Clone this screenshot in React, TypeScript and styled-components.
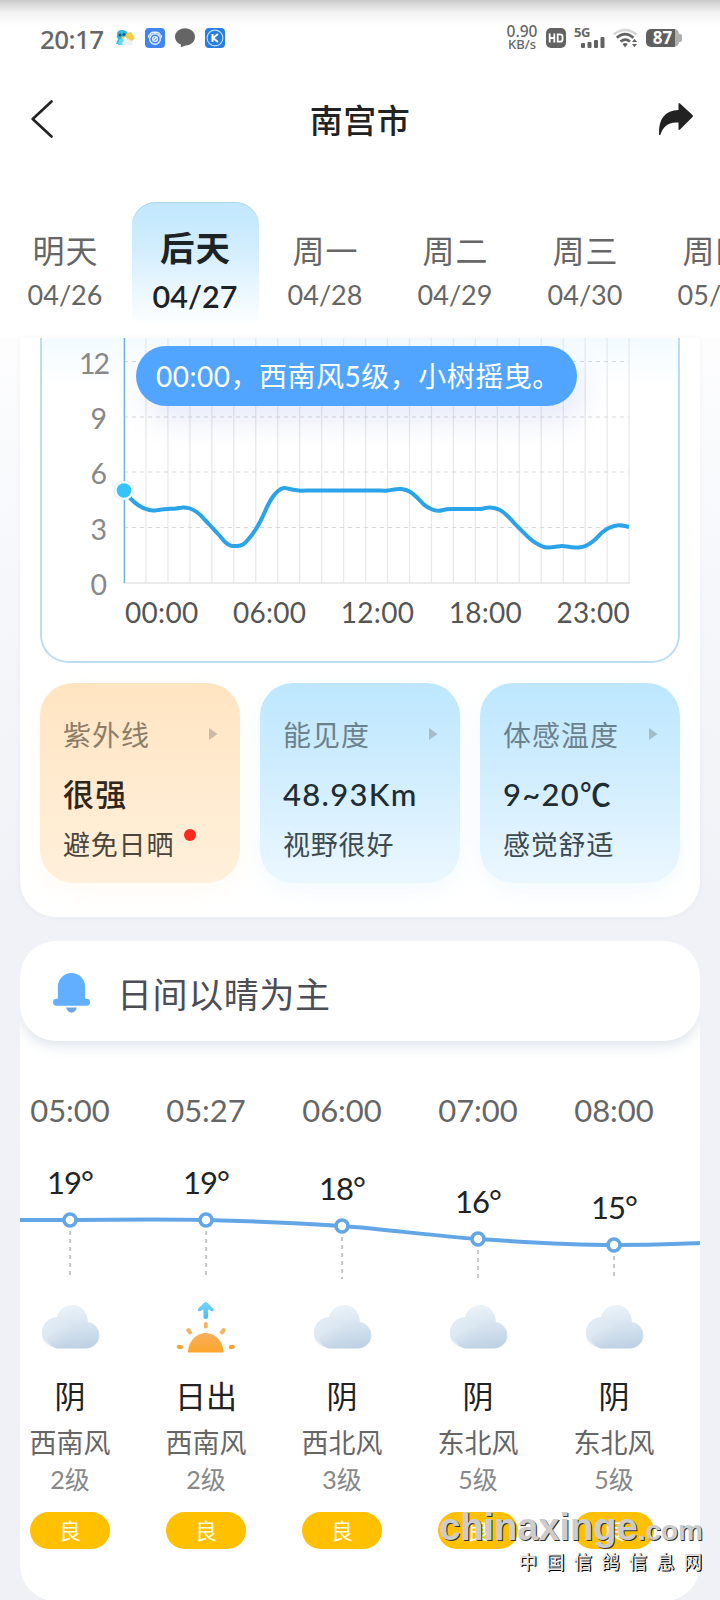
import React from 'react';
import styled, { createGlobalStyle } from 'styled-components';

const Global = createGlobalStyle`
  * { box-sizing: border-box; }
  body { margin: 0; background: #f1f2f7; }
`;

const Screen = styled.main`
  position: relative;
  width: 720px;
  height: 1600px;
  overflow: hidden;
  font-family: Lato, 'Noto Sans CJK SC', sans-serif;
  color: #222;
  background: linear-gradient(#fdfdfe 338px, #f4f6fa 640px, #f1f2f7 900px, #f0f1f6);
`;

const TopArea = styled.header`
  height: 338px;
  background: linear-gradient(#cacaca 0, #dcdcdc 5px, #f3f3f3 13px, #fff 26px);
`;

const StatusBar = styled.div`
  display: flex;
  align-items: center;
  height: 76px;
  padding: 0 38px 0 40px;
  color: #666;
`;

const Clock = styled.span`
  width: 75px;
  padding-top: 2px;
  font: 500 26px/36px 'Noto Sans', sans-serif;
  letter-spacing: -0.6px;
  white-space: nowrap;
`;

const StatusIcons = styled.div<{ $gap: number }>`
  display: flex;
  align-items: center;
  gap: ${(p) => p.$gap}px;
`;

const Spacer = styled.div`
  flex: 1;
`;

const NetSpeed = styled.div`
  width: 32px;
  margin-right: 8px;
  font: 500 13px/13px 'Noto Sans', sans-serif;
  text-align: center;
  white-space: nowrap;
  span { display: block; }
  span:first-child { font-size: 15.5px; }
`;

const TitleBar = styled.div`
  display: flex;
  align-items: center;
  justify-content: space-between;
  height: 86px;
  padding: 0 26px 0 30px;
`;

const Title = styled.h1`
  margin: 2px 0 0 8px;
  font-size: 33px;
  font-weight: 500;
  line-height: 48px;
  letter-spacing: 0.5px;
`;

const Tabs = styled.nav`
  display: flex;
  width: 780px;
  padding-top: 40px;
`;

const Tab = styled.div<{ $active?: boolean }>`
  flex: none;
  display: flex;
  flex-direction: column;
  align-items: center;
  width: 127px;
  height: 124px;
  margin: 0 1.5px;
  border-radius: 24px 24px 12px 12px;
  color: ${(p) => (p.$active ? '#1d2226' : '#666')};
  background: ${(p) => (p.$active ? 'linear-gradient(#c2e7fd, #d0edfe 35%, #fff)' : 'none')};
  box-shadow: ${(p) => (p.$active ? 'inset 0 1px 0 #acd6ee' : 'none')};
`;

const TabDay = styled.span<{ $active?: boolean }>`
  padding-top: ${(p) => (p.$active ? 21 : 25)}px;
  font-size: ${(p) => (p.$active ? 34.5 : 32)}px;
  font-weight: ${(p) => (p.$active ? 600 : 400)};
  line-height: ${(p) => (p.$active ? 50 : 48)}px;
  letter-spacing: 1px;
  text-indent: 1px;
`;

const TabDate = styled.span<{ $active?: boolean }>`
  padding-top: ${(p) => (p.$active ? 3 : 0)}px;
  font-size: ${(p) => (p.$active ? 30.5 : 27)}px;
  font-weight: ${(p) => (p.$active ? 600 : 400)};
  line-height: 40px;
`;

const WindCard = styled.section`
  height: 579px;
  margin: 0 20px;
  padding: 0 20px;
  border-radius: 0 0 36px 36px;
  background: #fff;
  box-shadow: 0 0 6px rgba(40, 60, 100, 0.05);
`;

const ChartBox = styled.div`
  position: relative;
  height: 325px;
  border: 2px solid #bddcf2;
  border-top: 0;
  border-radius: 0 0 28px 28px;
  background: linear-gradient(#f3fbff, #fff 50px);
`;

const ChartRow = styled.div`
  display: flex;
  height: 245px;
`;

const YAxis = styled.div`
  display: flex;
  flex-direction: column;
  gap: 5.2px;
  width: 65px;
  margin-right: 17px;
  font-size: 28.5px;
  line-height: 50px;
  text-align: right;
  color: #888;
  span:first-child { letter-spacing: -2px; margin-right: -1px; }
`;

const Plot = styled.svg`
  display: block;
  overflow: visible;
`;

const XAxis = styled.div`
  display: flex;
  justify-content: space-between;
  width: 505px;
  margin-left: 83px;
  padding-top: 9px;
  font-size: 28px;
  line-height: 40px;
  letter-spacing: 0.3px;
  color: #555;
`;

const Tooltip = styled.div`
  position: absolute;
  left: 94px;
  top: 7.5px;
  width: 441px;
  height: 60px;
  padding-left: 20px;
  border-radius: 30px;
  background: #52a5ff;
  box-shadow: 8px 16px 28px rgba(90, 120, 210, 0.14);
  color: #fff;
  font-size: 28px;
  line-height: 61px;
  letter-spacing: 0.5px;
  white-space: nowrap;
`;

const Stats = styled.div`
  display: flex;
  gap: 20px;
  padding-top: 20px;
`;

const StatCard = styled.article<{ $warm?: boolean }>`
  width: 200px;
  height: 200px;
  padding: 30px 22px 0 23px;
  border-radius: 33px;
  color: ${(p) => (p.$warm ? '#30271a' : '#1f2c33')};
  background: ${(p) => (p.$warm
    ? 'linear-gradient(#ffe4c1, #ffeace 45%, #fff0db)'
    : 'linear-gradient(#bde7fe, #d0edfe 45%, #ebf7ff)')};
  box-shadow: 0 8px 22px ${(p) => (p.$warm ? 'rgba(255, 225, 180, 0.14)' : 'rgba(170, 220, 250, 0.14)')};
`;

const StatName = styled.div`
  display: flex;
  align-items: center;
  justify-content: space-between;
  font-size: 28px;
  line-height: 44px;
  letter-spacing: 1px;
  opacity: 0.55;
  svg { margin-bottom: 2px; }
`;

const StatValue = styled.div`
  padding-top: 15px;
  font-size: 31px;
  font-weight: 500;
  line-height: 44px;
  letter-spacing: 1.3px;
`;

const StatNote = styled.div`
  display: flex;
  gap: 10px;
  padding-top: 8px;
  font-size: 27px;
  line-height: 42px;
  letter-spacing: 0.8px;
  opacity: 0.85;
`;

const RedDot = styled.i`
  width: 12px;
  height: 12px;
  margin-top: 5px;
  border-radius: 50%;
  background: #f90800;
`;

const HourCard = styled.section`
  height: 660px;
  margin: 24px 20px 0;
  border-radius: 36px;
  overflow: hidden;
  background: #fff;
`;

const Notice = styled.div`
  display: flex;
  align-items: center;
  height: 100px;
  padding: 5px 0 0 33px;
  border-radius: 36px;
  background: #fff;
  box-shadow: 0 4px 14px rgba(70, 110, 150, 0.2);
  color: #4c4d55;
  font-size: 35px;
  line-height: 50px;
  letter-spacing: 0.6px;
  svg { margin: 0 27px 1px 0; }
`;

const Track = styled.div`
  display: flex;
  width: 680px;
  margin-left: -18px;
`;

const HourTime = styled.div`
  width: 136px;
  height: 93px;
  padding-top: 46px;
  font-size: 31px;
  line-height: 46px;
  text-align: center;
  color: #666;
`;

const Curve = styled.div`
  position: relative;
  height: 166px;
`;

const CurveLine = styled.svg`
  position: absolute;
  left: 0;
  top: 0;
`;

const Temp = styled.div<{ $shift: number }>`
  width: 136px;
  padding-top: ${(p) => 28 + p.$shift}px;
  font-size: 31px;
  line-height: 40px;
  letter-spacing: -1px;
  text-align: center;
`;

const Hour = styled.div`
  display: flex;
  flex-direction: column;
  align-items: center;
  width: 136px;
`;

const Weather = styled.div`
  margin-top: 17px;
  font-size: 31px;
  line-height: 46px;
`;

const Wind = styled.div`
  margin-top: 4px;
  font-size: 27px;
  line-height: 40px;
  color: #666;
`;

const Level = styled.div`
  margin-top: -2px;
  font-size: 25px;
  line-height: 36px;
  color: #888;
`;

const Quality = styled.div`
  width: 80px;
  height: 37px;
  margin-top: 15px;
  border-radius: 19px;
  background: #ffc000;
  color: #fffbe0;
  font-size: 22px;
  line-height: 38px;
  text-align: center;
`;

const Watermark = styled.div`
  position: absolute;
  right: 17px;
  top: 1505px;
  font-family: 'Liberation Sans', 'Noto Sans CJK SC', sans-serif;
  font-weight: 700;
  color: #ccc;
  text-align: right;
  text-shadow: 1px 1px 0 #333;
`;

const Domain = styled.div`
  font-size: 38px;
  line-height: 44px;
  white-space: nowrap;
  small { font-size: 28px; }
`;

const SiteName = styled.div`
  margin: -3px -8px 0 0;
  font-size: 18.5px;
  font-weight: 500;
  line-height: 26px;
  letter-spacing: 9px;
  color: #e8e8e8;
  text-shadow: 1px 1px 0 #000, 1px 0 0 #222;
`;

type Pt = [number, number];

/* Smooth path through the points (Catmull-Rom converted to Béziers). */
const smooth = (pts: Pt[]) =>
  pts.reduce((d, p, i) => {
    if (i === 0) return `M${p[0]} ${p[1]}`;
    const a = pts[i - 2] || pts[i - 1];
    const b = pts[i - 1];
    const c = pts[i + 1] || p;
    return `${d} C${b[0] + (p[0] - a[0]) / 6} ${b[1] + (p[1] - a[1]) / 6} ${p[0] - (c[0] - b[0]) / 6} ${p[1] - (c[1] - b[1]) / 6} ${p[0]} ${p[1]}`;
  }, '');

const windPts: Pt[] = [
  [0, 152.7], [7, 161], [14, 167], [21, 170.7], [29, 172.6], [36, 171.7], [44, 171], [52, 170.6], [59, 169.4],
  [66, 170.5], [74, 175], [81, 182], [88, 189.5], [95, 197], [101, 204], [106, 207.3], [113, 208], [119, 206.5],
  [125, 200.5], [132, 191], [138, 180], [143, 169], [148, 160], [154, 153], [160, 150], [167, 151.3], [175, 152.6],
  [183, 152.6], [255, 152.6], [263, 152.6], [272, 151.2], [279, 151.2], [286, 153.7], [293, 159.5], [300, 166.6],
  [307, 171], [314, 172.8], [323, 171.3], [330, 171], [350, 171], [357, 171], [366, 169.4], [376, 172],
  [384, 178.5], [394, 189], [403, 198], [411, 204.5], [421, 209.3], [430, 209], [438, 208], [446, 209], [455, 209.5],
  [462, 207.7], [470, 202.5], [478, 194.5], [485, 189.8], [495, 187.3], [505, 189],
];

const tabs = [
  ['明天', '04/26'], ['后天', '04/27'], ['周一', '04/28'], ['周二', '04/29'], ['周三', '04/30'], ['周四', '05/01'],
];

const hours = [
  { time: '05:00', temp: '19°', y: 0, text: '阴', wind: '西南风', level: '2级' },
  { time: '05:27', temp: '19°', y: 0, text: '日出', wind: '西南风', level: '2级', sunrise: true },
  { time: '06:00', temp: '18°', y: 6, text: '阴', wind: '西北风', level: '3级' },
  { time: '07:00', temp: '16°', y: 19, text: '阴', wind: '东北风', level: '5级' },
  { time: '08:00', temp: '15°', y: 25, text: '阴', wind: '东北风', level: '5级' },
];

const stats = [
  { name: '紫外线', value: '很强', note: '避免日晒', warm: true },
  { name: '能见度', value: '48.93Km', note: '视野很好' },
  { name: '体感温度', value: '9~20℃', note: '感觉舒适' },
];

const BirdIcon = () => (
  <svg width="20" height="20" viewBox="0 0 20 20">
    <path d="M2 6Q2 2 7 2q5 0 6 4l-3 3-3 1 1 6H1l2-5Q1 9 2 6z" fill="#31b8dc" />
    <path d="M4 12l3-2 3 4-2 3H3z" fill="#65d7f1" />
    <path d="M12 5l4-1 4 6-5 5-5-7z" fill="#f6cc4c" />
    <path d="M8 17q-2-3 1-4 2-4 6-1 4 1 2 5z" fill="#edf1f4" />
    <circle cx="5" cy="7" r="1.6" fill="#215f80" /><circle cx="9" cy="6.5" r="1.5" fill="#215f80" />
    <path d="M6 9l4-1-2 3z" fill="#f0c94c" />
  </svg>
);

const PawIcon = () => (
  <svg width="20" height="20" viewBox="0 0 20 20">
    <rect width="20" height="20" rx="4" fill="#4285ee" />
    <g fill="none" stroke="#e4f0ff" strokeWidth="1.4">
      <circle cx="10" cy="11" r="5.3" /><circle cx="10" cy="11" r="2.4" />
      <path d="M4.5 10Q2.5 8 5 6.5 6 4 9 4.2h3q2.4.3 3 2.3 2.5 1.5.5 3.5M8.5 12l3-2.5" />
    </g>
  </svg>
);

const ChatIcon = () => (
  <svg width="20" height="20" viewBox="0 0 20 20">
    <path d="M10 .3c5.7 0 10 3.6 10 8.5s-4.3 8.6-9.4 8.6L5.8 19.3 6 16.6C2.4 15.3 0 12.4 0 8.8 0 4 4.4.3 10 .3z" fill="#656565" />
  </svg>
);

const KIcon = () => (
  <svg width="20" height="20" viewBox="0 0 20 20">
    <rect width="20" height="20" rx="4" fill="#287ddd" />
    <circle cx="10" cy="10" r="7.9" fill="none" stroke="#bfe0ff" strokeWidth="1.1" />
    <path d="M7.5 6v8M13 6l-5 4 5 4" fill="none" stroke="#fff" strokeWidth="2" />
  </svg>
);

const HdIcon = () => (
  <svg width="20" height="20" viewBox="0 0 20 20">
    <rect width="20" height="20" rx="5" fill="#636363" />
    <path d="M3.7 5.5v9M8.3 5.5v9M3.7 10h4.6M11.7 6.3v7.4h2q2.8 0 2.8-2V8.300q0-2-2.8-2z" fill="none" stroke="#fff" strokeWidth="1.8" />
  </svg>
);

const SignalBox = styled.div`
  width: 31px;
  height: 22px;
  font: 700 13px/11px 'Noto Sans', sans-serif;
  letter-spacing: -0.5px;
  svg { display: block; margin: -2px 0 0 7px; }
`;

const Signal = () => (
  <SignalBox>
    5G
    <svg width="24" height="12" viewBox="0 0 24 12" fill="#636363">
      <rect x="0" y="7" width="4" height="5" rx="1" /><rect x="6.5" y="6" width="4" height="6" rx="1" />
      <rect x="13" y="4" width="4" height="8" rx="1" /><rect x="19.5" y="1" width="4" height="11" rx="1" />
    </svg>
  </SignalBox>
);

const WifiIcon = () => (
  <svg width="25" height="20" viewBox="0 0 25 20" fill="none" strokeWidth="2.6">
    <path d="M.8 6.5Q12 -2.5 23.5 6.5" stroke="#d6d6d6" />
    <path d="M3.8 9.8Q12 2.5 20.5 9.8M7.5 13.6q5-4 9.5 0" stroke="#636363" />
    <path d="M9.5 16q2.700-2 5.200 0l-2.600 3.500zM19 14l2.500-3.200L24 14zM19 16h5l-2.500 3.200z" fill="#636363" />
  </svg>
);

const BatteryBox = styled.div`
  position: relative;
  width: 33px;
  height: 18px;
  margin-right: 3px;
  border-radius: 5px;
  background: linear-gradient(90deg, #5f5f5f 87%, #b0b0b0 87%);
  color: #fff;
  font: 700 17px/18px 'Noto Sans', sans-serif;
  text-align: center;
  &::after {
    content: '';
    position: absolute;
    right: -3px;
    top: 5px;
    width: 3px;
    height: 8px;
    border-radius: 0 2px 2px 0;
    background: #b0b0b0;
  }
`;

const Cloud = () => (
  <svg width="60" height="56" viewBox="0 0 60 56">
    <defs>
      <linearGradient id="body" gradientUnits="userSpaceOnUse" x1="26" y1="6" x2="32" y2="49">
        <stop offset="0" stopColor="#ebf3f9" /><stop offset=".5" stopColor="#d6e3ef" /><stop offset="1" stopColor="#bed1e4" />
      </linearGradient>
      <linearGradient id="puff" gradientUnits="userSpaceOnUse" x1="14" y1="17" x2="30" y2="44">
        <stop offset="0" stopColor="#e2ecf5" /><stop offset=".4" stopColor="#dce8f2" /><stop offset="1" stopColor="#c8d9e8" stopOpacity="0" />
      </linearGradient>
    </defs>
    <g fill="url(#body)">
      <path d="M17.500 48.500a16 16 0 0 1-.5-31.200A15.500 15.500 0 0 1 47.600 22a13.300 13.300 0 0 1-1.600 26.500z" />
    </g>
    <circle cx="17.500" cy="32.700" r="15.700" fill="url(#puff)" />
  </svg>
);

const Sunrise = () => (
  <svg width="60" height="56" viewBox="0 0 60 56">
    <defs>
      <linearGradient id="sun" x1="0" y1="0" x2="0" y2="1">
        <stop offset="0" stopColor="#f7b05c" /><stop offset="1" stopColor="#fda52c" />
      </linearGradient>
      <linearGradient id="up" x1="0" y1="0" x2="0" y2="1">
        <stop offset="0" stopColor="#76d6fb" /><stop offset="1" stopColor="#4cbaf0" />
      </linearGradient>
    </defs>
    <path d="M12 52.500C12 42 20 33 29.800 33S47.500 42 47.500 52.500z" fill="url(#sun)" />
    <path d="M29.800 2q1 0 2 1l5.700 5.800q1 2.500-1.300 2.500-1.500 0-4-2V17q0 2-2.400 2t-2.400-2V9.300q-2.500 2-4 2-2.300 0-1.300-2.500l5.700-5.800q1-1 2-1z" fill="url(#up)" />
    <g stroke="#f6b45f" strokeWidth="4" strokeLinecap="round">
      <path d="M29.800 24v2.500M12.300 30l1.800 2.500M47.700 30l-1.800 2.500" />
      <path d="M2.700 46.700l2.300.5M57 46.700l-2.300.5" stroke="#f0a736" />
    </g>
  </svg>
);

export default function App() {
  return (
    <Screen>
      <Global />
      <TopArea>
        <StatusBar>
          <Clock>20:17</Clock>
          <StatusIcons $gap={10}><BirdIcon /><PawIcon /><ChatIcon /><KIcon /></StatusIcons>
          <Spacer />
          <NetSpeed><span>0.90</span><span>KB/s</span></NetSpeed>
          <StatusIcons $gap={8}><HdIcon /><Signal /><WifiIcon /><BatteryBox>87</BatteryBox></StatusIcons>
        </StatusBar>
        <TitleBar>
          <svg width="24" height="38" viewBox="0 0 24 38" fill="none" stroke="#222" strokeWidth="2.6" strokeLinecap="round">
            <path d="M21.5 1.5L2.7 19l18.800 17.500" strokeLinejoin="round" />
          </svg>
          <Title>南宫市</Title>
          <svg width="36" height="34" viewBox="0 0 36 34" fill="#222">
            <path d="M20.5 1.500Q20.500.5 22 1.500L34.500 13q1 1 0 2L22 27.500q-1.500 1-1.500-.5V20.500C10 19.500 5 25 2.500 32.500Q1 34 1 31.500C.5 17 7 8.500 20.500 8z" />
          </svg>
        </TitleBar>
        <Tabs>
          {tabs.map(([day, date], i) => (
            <Tab key={date} $active={i === 1}>
              <TabDay $active={i === 1}>{day}</TabDay>
              <TabDate $active={i === 1}>{date}</TabDate>
            </Tab>
          ))}
        </Tabs>
      </TopArea>

      <WindCard>
        <ChartBox>
          <ChartRow>
            <YAxis>{[12, 9, 6, 3, 0].map((n) => <span key={n}>{n}</span>)}</YAxis>
            <Plot width="505" height="245" viewBox="0 0 505 245" fill="none">
              {Array.from({ length: 23 }, (_, i) => (
                <path key={i} d={`M${(i + 1) * 21.96} 0V245`} stroke="#e8e9ec" strokeWidth="1.3" />
              ))}
              {[23.5, 79, 134, 189.5].map((y) => (
                <path key={y} d={`M0 ${y}H505`} stroke="#d6d8db" strokeWidth="1.2" strokeDasharray="4 4" />
              ))}
              <path d="M0 245H506" stroke="#e4e5e8" strokeWidth="1.3" />
              <path d="M.4 0V245" stroke="#71b2dc" strokeWidth="1.5" />
              <path d={smooth(windPts)} stroke="#2ba3e8" strokeWidth="4" />
              <circle cx="0" cy="152.5" r="10.5" fill="#8bb6cf" opacity=".25" />
              <circle cx="0" cy="152.5" r="9.5" fill="#f7fdff" />
              <circle cx="0" cy="152.5" r="7.3" fill="#36c4f8" />
            </Plot>
          </ChartRow>
          <XAxis>{['00:00', '06:00', '12:00', '18:00', '23:00'].map((t) => <span key={t}>{t}</span>)}</XAxis>
          <Tooltip>00:00，西南风5级，小树摇曳。</Tooltip>
        </ChartBox>
        <Stats>
          {stats.map((s) => (
            <StatCard key={s.name} $warm={s.warm}>
              <StatName>
                {s.name}
                <svg width="9" height="12" viewBox="0 0 9 12" opacity=".55"><path d="M0 0l8.500 6L0 12z" fill="#555" /></svg>
              </StatName>
              <StatValue>{s.value}</StatValue>
              <StatNote>{s.note}{s.warm && <RedDot />}</StatNote>
            </StatCard>
          ))}
        </Stats>
      </WindCard>

      <HourCard>
        <Notice>
          <svg width="37" height="42" viewBox="0 0 38 42" fill="#62afff">
            <path d="M5 27V14.500a14 14 0 0 1 28 0V27h1.500a3.200 3.200 0 0 1 0 7h-31a3.200 3.200 0 0 1 0-7z" />
            <path d="M13.500 36h11q-1.500 5.300-5.500 5.300T13.500 36z" fill="#6aa6e8" />
          </svg>
          日间以晴为主
        </Notice>
        <Track>{hours.map((h) => <HourTime key={h.time}>{h.time}</HourTime>)}</Track>
        <Curve>
          <CurveLine width="680" height="162" viewBox="0 0 680 162" fill="none">
            <path d="M0 86H50C95 85.500 140 85 186 86S280 89 322 92 415 102 458 105 550 111 594 111 650 110 680 109" stroke="#63a6e6" strokeWidth="4" />
            {hours.map((h, i) => (
              <g key={h.time}>
                <path d={`M${50 + i * 136} ${97 + h.y}V145`} stroke="#aaa" strokeWidth="1.3" strokeDasharray="4 4" />
                <circle cx={50 + i * 136} cy={86 + h.y} r="6" fill="#fff" stroke="#63a6e6" strokeWidth="3.6" />
              </g>
            ))}
          </CurveLine>
          <Track>{hours.map((h) => <Temp key={h.time} $shift={h.y}>{h.temp}</Temp>)}</Track>
        </Curve>
        <Track>
          {hours.map((h) => (
            <Hour key={h.time}>
              {h.sunrise ? <Sunrise /> : <Cloud />}
              <Weather>{h.text}</Weather>
              <Wind>{h.wind}</Wind>
              <Level>{h.level}</Level>
              <Quality>良</Quality>
            </Hour>
          ))}
        </Track>
      </HourCard>

      <Watermark>
        <Domain>chinaxinge<small>.com</small></Domain>
        <SiteName>中国信鸽信息网</SiteName>
      </Watermark>
    </Screen>
  );
}
